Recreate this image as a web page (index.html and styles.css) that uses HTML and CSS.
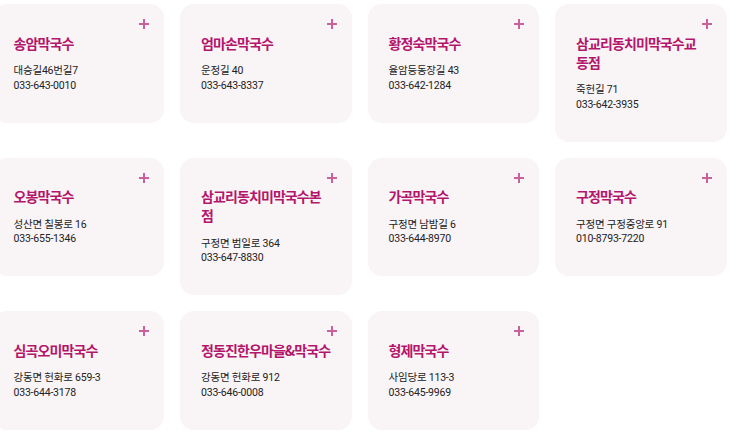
FILE: index.html
```html
<!DOCTYPE html>
<html lang="ko">
<head>
    <meta charset="utf-8">
    <title>막국수 맛집</title>
    <link rel="stylesheet" href="styles.css">
</head>
<body>
    <section class="shop-list">
        <div class="shop-card">
            <h3 class="shop-name">송암막국수</h3>
            <p class="shop-info">대승길46번길7<br>033-643-0010</p>
            <span class="shop-more"><svg viewBox="0 0 10 10"><rect x="4" y="0" width="2" height="10"/><rect x="0" y="4" width="10" height="2"/></svg></span>
        </div>
        <div class="shop-card">
            <h3 class="shop-name">엄마손막국수</h3>
            <p class="shop-info">운정길 40<br>033-643-8337</p>
            <span class="shop-more"><svg viewBox="0 0 10 10"><rect x="4" y="0" width="2" height="10"/><rect x="0" y="4" width="10" height="2"/></svg></span>
        </div>
        <div class="shop-card">
            <h3 class="shop-name">황정숙막국수</h3>
            <p class="shop-info">율암등동장길 43<br>033-642-1284</p>
            <span class="shop-more"><svg viewBox="0 0 10 10"><rect x="4" y="0" width="2" height="10"/><rect x="0" y="4" width="10" height="2"/></svg></span>
        </div>
        <div class="shop-card">
            <h3 class="shop-name">삼교리동치미막국수교동점</h3>
            <p class="shop-info">죽헌길 71<br>033-642-3935</p>
            <span class="shop-more"><svg viewBox="0 0 10 10"><rect x="4" y="0" width="2" height="10"/><rect x="0" y="4" width="10" height="2"/></svg></span>
        </div>

        <div class="shop-card">
            <h3 class="shop-name">오봉막국수</h3>
            <p class="shop-info">성산면 칠봉로 16<br>033-655-1346</p>
            <span class="shop-more"><svg viewBox="0 0 10 10"><rect x="4" y="0" width="2" height="10"/><rect x="0" y="4" width="10" height="2"/></svg></span>
        </div>
        <div class="shop-card">
            <h3 class="shop-name">삼교리동치미막국수본점</h3>
            <p class="shop-info">구정면 범일로 364<br>033-647-8830</p>
            <span class="shop-more"><svg viewBox="0 0 10 10"><rect x="4" y="0" width="2" height="10"/><rect x="0" y="4" width="10" height="2"/></svg></span>
        </div>
        <div class="shop-card">
            <h3 class="shop-name">가곡막국수</h3>
            <p class="shop-info">구정면 남밤길 6<br>033-644-8970</p>
            <span class="shop-more"><svg viewBox="0 0 10 10"><rect x="4" y="0" width="2" height="10"/><rect x="0" y="4" width="10" height="2"/></svg></span>
        </div>
        <div class="shop-card">
            <h3 class="shop-name">구정막국수</h3>
            <p class="shop-info">구정면 구정중앙로 91<br>010-8793-7220</p>
            <span class="shop-more"><svg viewBox="0 0 10 10"><rect x="4" y="0" width="2" height="10"/><rect x="0" y="4" width="10" height="2"/></svg></span>
        </div>

        <div class="shop-card">
            <h3 class="shop-name">심곡오미막국수</h3>
            <p class="shop-info">강동면 헌화로 659-3<br>033-644-3178</p>
            <span class="shop-more"><svg viewBox="0 0 10 10"><rect x="4" y="0" width="2" height="10"/><rect x="0" y="4" width="10" height="2"/></svg></span>
        </div>
        <div class="shop-card">
            <h3 class="shop-name">정동진한우마을&amp;막국수</h3>
            <p class="shop-info">강동면 헌화로 912<br>033-646-0008</p>
            <span class="shop-more"><svg viewBox="0 0 10 10"><rect x="4" y="0" width="2" height="10"/><rect x="0" y="4" width="10" height="2"/></svg></span>
        </div>
        <div class="shop-card">
            <h3 class="shop-name">형제막국수</h3>
            <p class="shop-info">사임당로 113-3<br>033-645-9969</p>
            <span class="shop-more"><svg viewBox="0 0 10 10"><rect x="4" y="0" width="2" height="10"/><rect x="0" y="4" width="10" height="2"/></svg></span>
        </div>
    </section>
</body>
</html>
```

FILE: styles.css
```css
body {
    margin: 0;
    background: #fff;
    font-family: "Noto Sans CJK KR", "Noto Sans", sans-serif;
    overflow: hidden;
}
.shop-list {
    display: grid;
    grid-template-columns: repeat(4, 171.5px);
    gap: 16px;
    align-items: start;
    margin-left: -7.5px;
    padding-top: 4px;
}
.shop-card {
    position: relative;
    background: #f9f4f6;
    border-radius: 14px;
    padding: 29.5px 21px 29.5px 21px;
}
.shop-name {
    margin: 0;
    font-size: 14px;
    letter-spacing: -0.9px;
    line-height: 19px;
    font-weight: 600;
    color: #b3166b;
}
.shop-info {
    margin: 11.5px 0 0;
    font-family: Roboto, "Noto Sans CJK KR", sans-serif;
    font-size: 10.5px;
    line-height: 14.5px;
    letter-spacing: -0.2px;
    color: #222;
}
.shop-more {
    position: absolute;
    top: 15px;
    right: 15px;
    width: 10px;
    height: 10px;
}
.shop-more svg {
    display: block;
    width: 10px;
    height: 10px;
    fill: #c9619c;
}
```
